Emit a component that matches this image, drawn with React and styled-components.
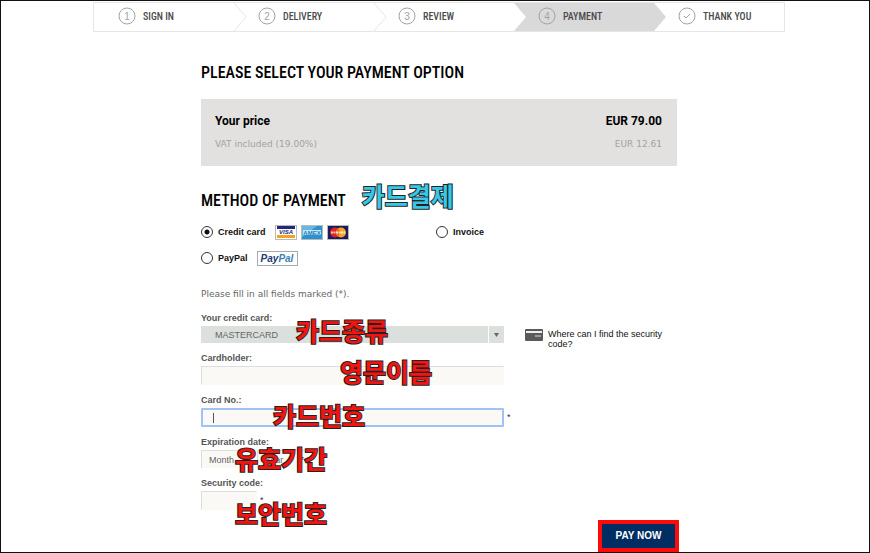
import React from "react";
import styled, { createGlobalStyle } from "styled-components";

const GlobalStyle = createGlobalStyle`
  * {
    box-sizing: border-box;
  }
  body {
    margin: 0;
    background: #fff;
    color: #111;
    font-family: "Liberation Sans", Arial, sans-serif;
    font-size: 10px;
    line-height: 12px;
  }
  h1, h2, p, ol {
    margin: 0;
    padding: 0;
  }
`;

const Page = styled.div`
  min-height: 100vh;
  border: 1px solid #111;
  padding: 1px 0 4px 8px;
`;

const Steps = styled.ol`
  display: flex;
  max-width: 692px;
  margin: 0 auto;
  border: 1px solid #e6e6e6;
  list-style: none;
`;

const StepItem = styled.li`
  position: relative;
  flex: 1 1 140px;
  display: flex;
  align-items: center;
  gap: 7px;
  height: 28px;
  padding-left: 24px;
  background: ${p => (p.$active ? "#d9d9d9" : "#fff")};
  color: #4a4a4a;
  font: 500 10px/12px "Roboto Condensed", "Liberation Sans Narrow", "Liberation Sans", sans-serif;

  &:last-child {
    flex-basis: 130px;
  }
`;

const Arrow = styled.svg`
  position: absolute;
  z-index: 1;
  top: 0;
  left: 100%;
  width: 13px;
  height: 28px;
`;

const StepMark = styled.svg`
  width: 18px;
  height: 18px;
  margin-top: -2px;
  fill: none;
  stroke: #a3a3a3;

  text {
    fill: #a3a3a3;
    stroke: none;
    font: 10px "Liberation Sans", sans-serif;
    text-anchor: middle;
  }
`;

const Content = styled.main`
  max-width: 476px;
  margin: 0 auto;
  padding-top: 31px;
`;

const headingFont = `
  font: 500 16px/20px "Roboto Condensed", "Liberation Sans Narrow", "Liberation Sans", sans-serif;
  color: #000;
`;

const Title = styled.h1`
  ${headingFont}
`;

const Subtitle = styled.h2`
  ${headingFont}
`;

const PriceBox = styled.section`
  display: grid;
  gap: 9px;
  margin-top: 16px;
  padding: 14px 15px 16px 14px;
  background: #e2e1df;
`;

const PriceRow = styled.div`
  display: flex;
  justify-content: space-between;
  color: ${p => (p.$total ? "#000" : "#a2a2a2")};
  font-family: ${p => (p.$total ? "Roboto" : "DejaVu Sans")}, sans-serif;
  font-size: ${p => (p.$total ? "12px" : "9px")};
  font-weight: ${p => (p.$total ? "bold" : "normal")};
  line-height: ${p => (p.$total ? "16px" : "12px")};
`;

const MethodHeader = styled.div`
  display: flex;
  align-items: center;
  gap: 16px;
  height: 40px;
  margin-top: 15px;
`;

const Note = styled.span`
  color: #f5130f;
  font: bold 25px/30px "Noto Sans CJK KR", sans-serif;
  white-space: nowrap;
  -webkit-text-stroke: 2px #222;
  paint-order: stroke fill;
`;

const HeaderNote = styled(Note)`
  margin-bottom: 12px;
  color: #35c8e8;
`;

// Notes pinned over the form fields.
const FieldNote = styled(Note)`
  position: absolute;
  z-index: 2;
  top: ${p => p.$top}px;
  left: ${p => p.$left}px;
  pointer-events: none;
`;

const Methods = styled.div`
  display: grid;
  grid-template-columns: 235px 1fr;
  gap: 10px 0;
  margin-top: 3px;
`;

const Method = styled.label`
  display: flex;
  align-items: center;
  gap: 5px;
  height: 16px;
  font: bold 9px/12px "Liberation Sans", sans-serif;
`;

const Radio = styled.input`
  appearance: none;
  width: 12px;
  height: 12px;
  margin: 0;
  border: 1px solid #333;
  border-radius: 50%;
  background: #fff;

  &:checked {
    background: radial-gradient(circle, #111 0 2px, #fff 3px);
  }
`;

const Logos = styled.span`
  display: flex;
  gap: 4px;
  margin-left: 4px;

  svg {
    display: block;
  }
`;

const Hint = styled.p`
  margin-top: 22px;
  color: #666;
  font: 9px/12px "DejaVu Sans", sans-serif;
`;

const FormLayout = styled.div`
  display: grid;
  grid-template-columns: 303px 1fr;
  gap: 18px;
  margin-top: 12px;
`;

const Fields = styled.form`
  display: grid;
  gap: 9px;
`;

const Field = styled.div`
  position: relative;
  display: grid;
  gap: 2px;

  label {
    color: #555;
    font: bold 9px/12px "Liberation Sans", sans-serif;
  }
`;

const Controls = styled.div`
  position: relative;
  display: flex;
  gap: 4px;
`;

const Input = styled.input`
  width: ${p => (p.$short ? "56px" : "100%")};
  height: 19px;
  padding: 0 10px;
  border: 1px solid #ddd;
  border-right-color: #faf9f5;
  border-bottom-color: #faf9f5;
  border-radius: 0;
  outline: none;
  background: #faf9f5;
  color: #555;
  font: 10px "Liberation Sans", sans-serif;

  ${p => p.$focused && "border: 2px solid #a0c2f7; border-radius: 1px;"}
`;

const Caret = styled.span`
  position: absolute;
  top: 5px;
  left: 12px;
  width: 1px;
  height: 10px;
  background: #555;
`;

const Required = styled.span`
  position: absolute;
  top: 3px;
  left: 100%;
  margin-left: 3px;
  color: #333;
  font-size: 9px;
`;

const ShortControls = styled(Controls)`
  justify-self: start;
`;

const SelectBox = styled.div`
  position: relative;
  width: ${p => (p.$short ? "52px" : "100%")};

  select {
    display: block;
    appearance: none;
    width: 100%;
    height: ${p => (p.$short ? "18px" : "17px")};
    padding: 0 8px 0 ${p => (p.$short ? "7px" : "14px")};
    border: ${p => (p.$short ? "1px solid #ddd" : "0")};
    border-right: 0;
    border-bottom: 0;
    border-radius: 0;
    background: ${p => (p.$short ? "#faf9f5" : "#dce0dc")};
    color: #666;
    font: 9px "Liberation Sans", sans-serif;
  }
`;

const SelectArrow = styled.span`
  position: absolute;
  top: 0;
  right: 0;
  display: flex;
  align-items: center;
  justify-content: center;
  width: 16px;
  height: 100%;
  border-left: ${p => (p.$plain ? "0" : "1px solid #fff")};
  pointer-events: none;
`;

const HelpLink = styled.a`
  display: flex;
  align-items: flex-start;
  gap: 5px;
  padding: 17px 0 0 3px;
  max-width: 146px;
  color: #111;
  font: 9px/10px "Liberation Sans", sans-serif;
  text-decoration: none;

  svg {
    flex: none;
  }
`;

const Actions = styled.div`
  display: flex;
  justify-content: flex-end;
  margin-top: 14px;
  padding-right: 2px;
`;

const PayButton = styled.button`
  width: 73px;
  height: 24px;
  padding: 0;
  border: 0;
  outline: 4px solid #fd0b0b;
  background: #002d62;
  color: #fff;
  font: bold 10px/12px "Liberation Sans", sans-serif;
`;

const steps = ["SIGN IN", "DELIVERY", "REVIEW", "PAYMENT", "THANK YOU"];

function Step({ label, index }) {
  const active = index === 3;
  const last = index === steps.length - 1;
  return (
    <StepItem $active={active} aria-current={active ? "step" : undefined}>
      <StepMark viewBox="0 0 18 18" aria-hidden="true">
        <circle cx="9" cy="9" r="8" />
        {last ? <path d="M6 9l2 2 4-4" /> : <text x="9" y="13">{index + 1}</text>}
      </StepMark>
      {label}
      {!last && (
        <Arrow viewBox="0 0 13 28" aria-hidden="true">
          <path
            d="M0 0L12 14L0 28"
            fill={active ? "#d9d9d9" : "#fff"}
            stroke={index < 2 ? "#e6e6e6" : "none"}
          />
        </Arrow>
      )}
    </StepItem>
  );
}

function Visa() {
  return (
    <svg width="22" height="15" aria-label="Visa">
      <path d="M0 0h22v15H0z" fill="#b9b9b9" />
      <path d="M1 1h20v13H1z" fill="#fff" />
      <path d="M2 1h18v3H2z" fill="#24277b" />
      <path d="M2 10h18v3H2z" fill="#f5a31b" />
      <text x="11" y="9" textAnchor="middle" fontSize="6" fontWeight="bold" fontStyle="italic" fill="#24277b">VISA</text>
    </svg>
  );
}

function Amex() {
  return (
    <svg width="22" height="15" aria-label="American Express">
      <path d="M0 0h22v15H0z" fill="#b9b9b9" />
      <path d="M1 1h20v13H1z" fill="#2c91cc" />
      <path d="M1 1h15L1 12z" fill="#65b8e2" />
      <path d="M2 5h18v5H2z" fill="#c6e6f5" />
      <text x="11" y="10" textAnchor="middle" fontSize="6" fontWeight="bold" fill="#247eb8">AMEX</text>
    </svg>
  );
}

function MasterCard() {
  return (
    <svg width="22" height="15" aria-label="MasterCard">
      <path d="M0 0h22v15H0z" fill="#b9b9b9" />
      <path d="M1 1h20v13H1z" fill="#1b1b5e" />
      <circle cx="8" cy="7.5" r="5" fill="#df251c" />
      <circle cx="14" cy="7.5" r="5" fill="#f6a623" />
      <path d="M11 3.5a5 5 0 0 1 0 8a5 5 0 0 1 0-8" fill="#ec6b20" />
      <path d="M4 7.5h14" stroke="#fff" strokeWidth="2" strokeDasharray="2 .5" opacity=".75" />
    </svg>
  );
}

function PayPal() {
  return (
    <svg width="41" height="15" aria-label="PayPal">
      <rect x=".5" y=".5" width="40" height="14" fill="#fff" stroke="#aaa" />
      <text x="20" y="11" textAnchor="middle" fontSize="10" fontWeight="bold" fontStyle="italic">
        <tspan fill="#243b75">Pay</tspan>
        <tspan fill="#3b81b5">Pal</tspan>
      </text>
    </svg>
  );
}

function Triangle() {
  return (
    <svg width="5" height="4" aria-hidden="true">
      <path d="M0 0h5L2.5 4z" fill="#666" />
    </svg>
  );
}

export default function App() {
  return (
    <Page>
      <GlobalStyle />
      <Steps>
        {steps.map((label, i) => (
          <Step key={label} label={label} index={i} />
        ))}
      </Steps>
      <Content>
        <Title>PLEASE SELECT YOUR PAYMENT OPTION</Title>
        <PriceBox>
          <PriceRow $total>
            <span>Your price</span>
            <span>EUR 79.00</span>
          </PriceRow>
          <PriceRow>
            <span>VAT included (19.00%)</span>
            <span>EUR 12.61</span>
          </PriceRow>
        </PriceBox>
        <MethodHeader>
          <Subtitle>METHOD OF PAYMENT</Subtitle>
          <HeaderNote>카드결제</HeaderNote>
        </MethodHeader>
        <Methods>
          <Method>
            <Radio type="radio" name="method" defaultChecked />
            Credit card
            <Logos>
              <Visa />
              <Amex />
              <MasterCard />
            </Logos>
          </Method>
          <Method>
            <Radio type="radio" name="method" />
            Invoice
          </Method>
          <Method>
            <Radio type="radio" name="method" />
            PayPal
            <Logos>
              <PayPal />
            </Logos>
          </Method>
        </Methods>
        <Hint>Please fill in all fields marked (*).</Hint>
        <FormLayout>
          <Fields id="payment" onSubmit={e => e.preventDefault()}>
            <Field>
              <label htmlFor="card">Your credit card:</label>
              <SelectBox>
                <select id="card">
                  <option>MASTERCARD</option>
                </select>
                <SelectArrow><Triangle /></SelectArrow>
              </SelectBox>
              <FieldNote $top={3} $left={95}>카드종류</FieldNote>
            </Field>
            <Field>
              <label htmlFor="holder">Cardholder:</label>
              <Input id="holder" />
              <FieldNote $top={4} $left={139}>영문이름</FieldNote>
            </Field>
            <Field>
              <label htmlFor="number">Card No.:</label>
              <Controls>
                <Input id="number" $focused />
                <Caret />
                <Required>*</Required>
              </Controls>
              <FieldNote $top={6} $left={72}>카드번호</FieldNote>
            </Field>
            <Field>
              <label htmlFor="month">Expiration date:</label>
              <Controls>
                <SelectBox $short>
                  <select id="month">
                    <option>Month</option>
                  </select>
                  <SelectArrow $plain><Triangle /></SelectArrow>
                </SelectBox>
                <SelectBox $short>
                  <select aria-label="Year">
                    <option>Year</option>
                  </select>
                  <SelectArrow $plain><Triangle /></SelectArrow>
                </SelectBox>
              </Controls>
              <FieldNote $top={7} $left={34}>유효기간</FieldNote>
            </Field>
            <Field>
              <label htmlFor="code">Security code:</label>
              <ShortControls>
                <Input id="code" $short />
                <Required>*</Required>
              </ShortControls>
              <FieldNote $top={21} $left={34}>보안번호</FieldNote>
            </Field>
          </Fields>
          <HelpLink href="#security-code">
            <svg width="18" height="12" aria-hidden="true">
              <rect width="18" height="12" rx="1" fill="#5a5a5a" />
              <path d="M1 2h16v2H1z" fill="#eee" />
              <path d="M10 7h6" stroke="#ddd" />
            </svg>
            <span>Where can I find the security code?</span>
          </HelpLink>
        </FormLayout>
        <Actions>
          <PayButton type="submit" form="payment">PAY NOW</PayButton>
        </Actions>
      </Content>
    </Page>
  );
}
